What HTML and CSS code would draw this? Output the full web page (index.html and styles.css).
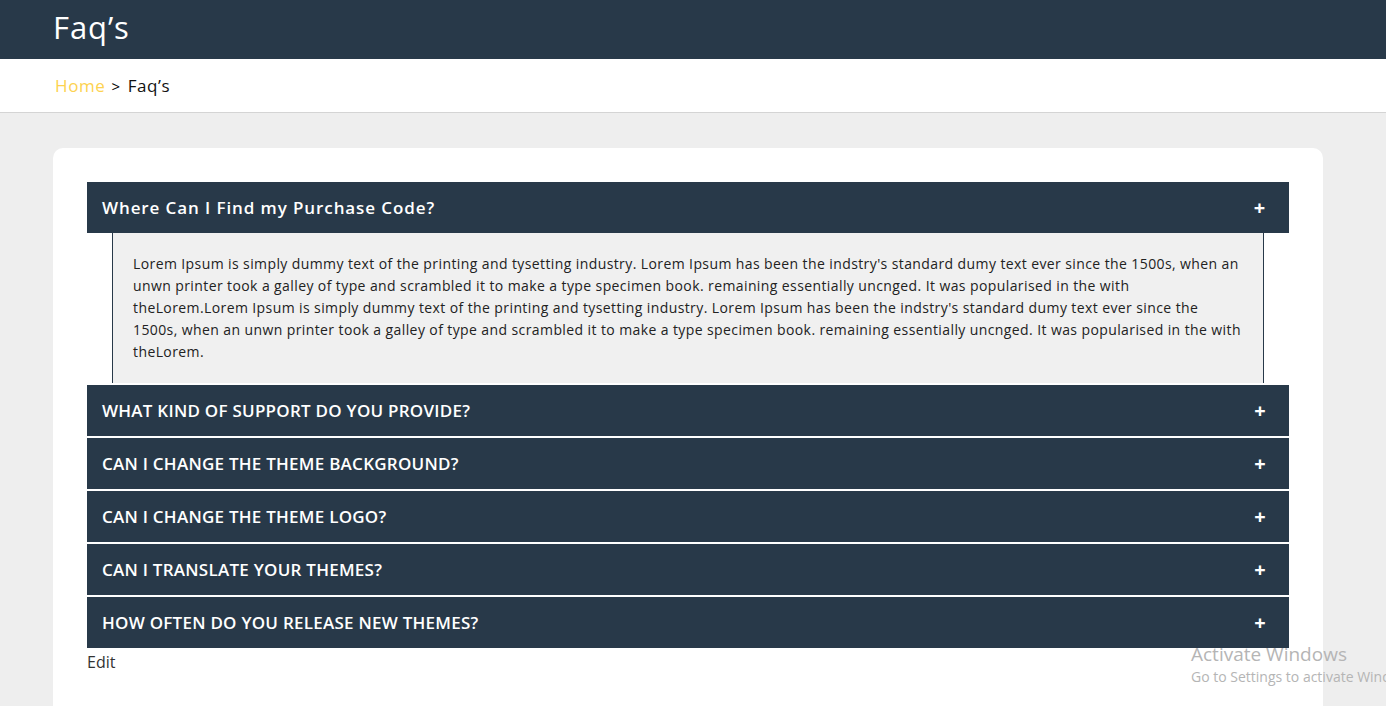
FILE: index.html
```html
<!DOCTYPE html>
<html lang="en">
<head>
    <meta charset="UTF-8">
    <meta name="viewport" content="width=device-width, initial-scale=1.0">
    <title>Faq's</title>
    <link rel="stylesheet" href="styles.css">
</head>
<body>
    <header class="page-title">
        <h1>Faq’s</h1>
    </header>
    <nav class="breadcrumb">
        <a href="#" class="crumb-home">Home</a>
        <span class="crumb-sep">&gt;</span>
        <span class="crumb-current">Faq’s</span>
    </nav>

    <main class="content">
        <div class="faq-card">
            <div class="faq-list">
                <div class="faq-item open">
                    <div class="faq-head">
                        <span>Where Can I Find my Purchase Code?</span>
                        <span class="faq-plus">+</span>
                    </div>
                    <div class="faq-body">
                        <p>Lorem Ipsum is simply dummy text of the printing and tysetting industry. Lorem Ipsum has been the indstry's standard dumy text ever since the 1500s, when an unwn printer took a galley of type and scrambled it to make a type specimen book. remaining essentially uncnged. It was popularised in the with theLorem.Lorem Ipsum is simply dummy text of the printing and tysetting industry. Lorem Ipsum has been the indstry's standard dumy text ever since the 1500s, when an unwn printer took a galley of type and scrambled it to make a type specimen book. remaining essentially uncnged. It was popularised in the with theLorem.</p>
                    </div>
                </div>
                <div class="faq-item">
                    <div class="faq-head">
                        <span>WHAT KIND OF SUPPORT DO YOU PROVIDE?</span>
                        <span class="faq-plus">+</span>
                    </div>
                </div>
                <div class="faq-item">
                    <div class="faq-head">
                        <span>CAN I CHANGE THE THEME BACKGROUND?</span>
                        <span class="faq-plus">+</span>
                    </div>
                </div>
                <div class="faq-item">
                    <div class="faq-head">
                        <span>CAN I CHANGE THE THEME LOGO?</span>
                        <span class="faq-plus">+</span>
                    </div>
                </div>
                <div class="faq-item">
                    <div class="faq-head">
                        <span>CAN I TRANSLATE YOUR THEMES?</span>
                        <span class="faq-plus">+</span>
                    </div>
                </div>
                <div class="faq-item">
                    <div class="faq-head">
                        <span>HOW OFTEN DO YOU RELEASE NEW THEMES?</span>
                        <span class="faq-plus">+</span>
                    </div>
                </div>
            </div>
            <a href="#" class="edit-link">Edit</a>
        </div>
    </main>

    <!-- windows watermark sitting over the page -->
    <div class="activate">
        <div class="activate-title">Activate Windows</div>
        <div class="activate-sub">Go to Settings to activate Windows.</div>
    </div>
</body>
</html>
```

FILE: styles.css
```css
body {
    font-family: 'Open Sans', sans-serif;
    margin: 0;
    padding: 0;
    background-color: #eeeeee;
    overflow: hidden;
}

.page-title {
    background-color: #283949;
    height: 59px;
    box-sizing: border-box;
    padding: 0 53px 6px;
    display: flex;
    align-items: center;
}

.page-title h1 {
    margin: 0;
    color: #fff;
    font-size: 31px;
    font-weight: 400;
    letter-spacing: 0.9px;
}

.breadcrumb {
    background-color: #fff;
    height: 53px;
    border-bottom: 1px solid #d4d4d4;
    padding: 0 55px;
    display: flex;
    align-items: center;
    font-size: 17px;
    letter-spacing: 0.6px;
}

.crumb-home {
    color: #fdd24f;
    text-decoration: none;
}

.crumb-sep {
    margin: 0 7px 0 6px;
    color: #000;
    font-size: 15px;
}

.crumb-current {
    color: #111;
}

.content {
    padding: 35px 63px 0 53px;
}

.faq-card {
    background-color: #fff;
    border-radius: 10px;
    padding: 34px 34px 60px;
    min-height: 600px;
}

.faq-list {
    display: flex;
    flex-direction: column;
    gap: 2px;
}

.faq-head {
    background-color: #283949;
    color: #fff;
    height: 51px;
    padding: 0 23px 0 15px;
    display: flex;
    align-items: center;
    justify-content: space-between;
    font-size: 17px;
    font-weight: 600;
    letter-spacing: 0.25px;
}

.faq-item.open .faq-head {
    letter-spacing: 0.9px;
}

.faq-plus {
    font-size: 20px;
    font-weight: 700;
}

.faq-body {
    margin: 0 25px;
    background-color: #f0f0f0;
    border-left: 1px solid #283949;
    border-right: 1px solid #283949;
    padding: 20px;
}

.faq-body p {
    margin: 0;
    font-size: 14px;
    line-height: 22px;
    letter-spacing: 0.4px;
    color: #222;
}

.edit-link {
    display: inline-block;
    margin-top: 3px;
    color: #333;
    text-decoration: none;
    font-size: 16px;
}

.activate {
    position: absolute;
    left: 1191px;
    top: 641px;
    color: #b5b5b5;
    font-family: 'Open Sans', sans-serif;
    white-space: nowrap;
}

.activate-title {
    font-size: 19px;
}

.activate-sub {
    font-size: 14px;
}
```
